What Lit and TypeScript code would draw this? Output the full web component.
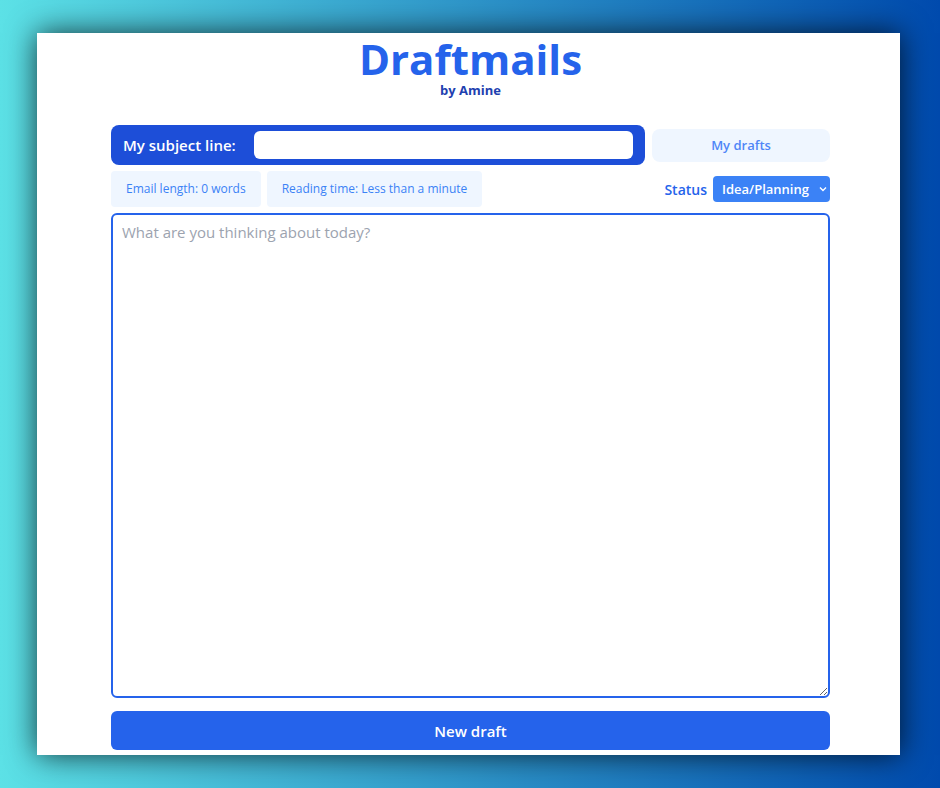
import { LitElement, html, css } from "lit";
import { customElement, state } from "lit/decorators.js";

const STATUSES = ["Idea/Planning", "Writing", "Editing", "Ready to send"];

@customElement("app-root")
export class AppRoot extends LitElement {
  @state() private subject = "";
  @state() private body = "";

  static styles = css`
    :host {
      display: flex;
      box-sizing: border-box;
      min-height: 100vh;
      padding: 33px 40px 33px 37px;
      background: linear-gradient(90deg, #5ce1e6, #004aad);
      font-family: "Open Sans", "Noto Sans", sans-serif;
      color: #2563eb;
    }
    * {
      box-sizing: border-box;
    }
    button,
    input,
    select,
    textarea {
      margin: 0;
      border: 0;
      font-family: inherit;
    }
    .panel {
      flex: 1;
      display: flex;
      flex-direction: column;
      min-width: 0;
      padding: 0 70px 5px 74px;
      background: #fff;
      box-shadow: 0 0 28px rgba(0, 0, 0, 0.75);
    }
    .brand {
      display: flex;
      flex-direction: column;
      align-items: center;
      padding: 4px 0 26px;
    }
    .title {
      margin: 0;
      font-size: 42px;
      line-height: 44px;
      font-weight: 700;
    }
    .author {
      margin: 0;
      font-size: 13px;
      line-height: 18px;
      font-weight: 700;
      color: #1e40af;
    }
    .top {
      display: grid;
      grid-template-columns: 3fr 1fr;
      align-items: center;
      gap: 7px;
    }
    .subject {
      min-width: 0;
      display: flex;
      align-items: center;
      gap: 18px;
      height: 40px;
      padding: 0 12px;
      border-radius: 8px;
      background: #1d4ed8;
      color: #fff;
      font-size: 15px;
      font-weight: 600;
    }
    .subject-input {
      flex: 1;
      min-width: 0;
      height: 28px;
      padding: 0 8px;
      border-radius: 6px;
      background: #fff;
      font-size: 15px;
    }
    .drafts {
      height: 33px;
      padding: 0;
      border-radius: 8px;
      background: #eff6ff;
      color: #4f86f7;
      font-size: 13px;
      font-weight: 600;
    }
    .meta {
      display: flex;
      align-items: center;
      gap: 6px;
      padding: 6px 0;
    }
    .chip {
      padding: 0 15px;
      border-radius: 4px;
      background: #eff6ff;
      color: #3b82f6;
      font-size: 12px;
      line-height: 36px;
      font-weight: 500;
    }
    .status {
      margin-left: auto;
      font-size: 14px;
      font-weight: 600;
    }
    .select-wrap {
      position: relative;
      display: flex;
    }
    .select {
      appearance: none;
      width: 117px;
      height: 26px;
      padding: 0 9px;
      border-radius: 4px;
      background: #3b82f6;
      color: #fff;
      font-size: 13px;
      font-weight: 600;
    }
    .chevron {
      position: absolute;
      right: 3px;
      top: 9px;
      width: 8px;
      height: 8px;
      pointer-events: none;
    }
    .editor {
      flex: 1;
      width: 100%;
      min-height: 200px;
      padding: 7px 9px;
      border: 2px solid #2563eb;
      border-radius: 6px;
      background: #fff;
      color: #1f2937;
      font-size: 15px;
      line-height: 20px;
      resize: vertical;
      outline: none;
    }
    .editor::placeholder {
      color: #9ca3af;
    }
    .new {
      height: 39px;
      margin-top: 13px;
      border-radius: 6px;
      background: #2563eb;
      color: #fff;
      font-size: 15px;
      font-weight: 600;
    }
  `;

  private get words() {
    return this.body.split(/\s+/).filter(Boolean).length;
  }

  private get readingTime() {
    const minutes = Math.floor(this.words / 200);
    if (minutes < 1) return "Less than a minute";
    return minutes === 1 ? "1 minute" : `${minutes} minutes`;
  }

  private reset() {
    this.subject = "";
    this.body = "";
  }

  render() {
    return html`
      <main class="panel">
        <header class="brand">
          <h1 class="title">Draftmails</h1>
          <p class="author">by Amine</p>
        </header>
        <div class="top">
          <div class="subject">
            <label for="subject">My subject line:</label>
            <input
              id="subject"
              class="subject-input"
              type="text"
              .value=${this.subject}
              @input=${(e: Event) => (this.subject = (e.target as HTMLInputElement).value)}
            />
          </div>
          <button class="drafts" type="button">My drafts</button>
        </div>
        <div class="meta">
          <span class="chip">Email length: ${this.words} words</span>
          <span class="chip">Reading time: ${this.readingTime}</span>
          <label class="status" for="status">Status</label>
          <div class="select-wrap">
            <select id="status" class="select">
              ${STATUSES.map((s) => html`<option>${s}</option>`)}
            </select>
            <svg class="chevron" viewBox="0 0 8 8" aria-hidden="true">
              <path d="M1 2.5 4 5.5 7 2.5" fill="none" stroke="#fff" stroke-width="1.4" />
            </svg>
          </div>
        </div>
        <textarea
          class="editor"
          aria-label="Email body"
          placeholder="What are you thinking about today?"
          .value=${this.body}
          @input=${(e: Event) => (this.body = (e.target as HTMLTextAreaElement).value)}
        ></textarea>
        <button class="new" type="button" @click=${this.reset}>New draft</button>
      </main>
    `;
  }
}
